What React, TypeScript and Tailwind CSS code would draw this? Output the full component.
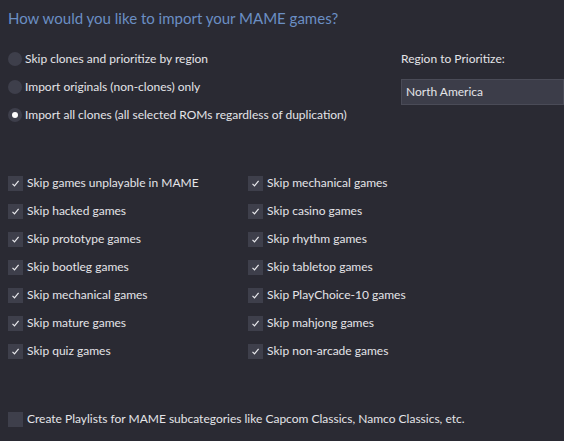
import { useState } from 'react'

const radios = [
  'Skip clones and prioritize by region',
  'Import originals (non-clones) only',
  'Import all clones (all selected ROMs regardless of duplication)',
]

const leftChecks = [
  'Skip games unplayable in MAME',
  'Skip hacked games',
  'Skip prototype games',
  'Skip bootleg games',
  'Skip mechanical games',
  'Skip mature games',
  'Skip quiz games',
]

const rightChecks = [
  'Skip mechanical games',
  'Skip casino games',
  'Skip rhythm games',
  'Skip tabletop games',
  'Skip PlayChoice-10 games',
  'Skip mahjong games',
  'Skip non-arcade games',
]

function Radio({ label, checked }: { label: string; checked: boolean }) {
  return (
    <div className="flex h-7 items-center">
      <span className="flex h-[14px] w-[14px] items-center justify-center rounded-full bg-[#3e3f4b]">
        {checked && <span className="h-[6px] w-[6px] rounded-full bg-white" />}
      </span>
      <span className="ml-[3px]">{label}</span>
    </div>
  )
}

function Check({ label, checked }: { label: string; checked: boolean }) {
  return (
    <div className="flex h-7 items-center">
      <span className="flex h-[15px] w-[15px] items-center justify-center bg-[#3e3f4b]">
        {checked && (
          <svg width="9" height="9" viewBox="0 0 9 9" fill="none">
            <path d="M1.5 4.8 L3.5 6.8 L7.6 1.8" stroke="#e8e8ec" strokeWidth="1.2" />
          </svg>
        )}
      </span>
      <span className="ml-[4px]">{label}</span>
    </div>
  )
}

export default function App() {
  const [selected] = useState(2)

  return (
    <div
      className="h-[441px] w-[564px] overflow-hidden bg-[#2a2a33] text-[12px] text-[#e4e4e8]"
      style={{ fontFamily: 'Lato, "Open Sans", sans-serif' }}
    >
      <h1 className="pl-2 pt-[6px] text-[15px] leading-6 text-[#6b8fc4]">
        How would you like to import your MAME games?
      </h1>

      <div className="mt-[15px] flex pl-2">
        <div className="w-[393px]">
          {radios.map((r, i) => (
            <Radio key={r} label={r} checked={i === selected} />
          ))}
        </div>
        <div className="flex-1">
          <div className="flex h-7 items-center">Region to Prioritize:</div>
          <div className="mt-[6px] flex h-[26px] items-center border border-[#4a4b57] bg-[#3c3d49] pl-[4px]">
            North America
          </div>
        </div>
      </div>

      <div className="mt-[40px] flex pl-2">
        <div className="w-[240px]">
          {leftChecks.map((c) => (
            <Check key={c} label={c} checked />
          ))}
        </div>
        <div>
          {rightChecks.map((c) => (
            <Check key={c + 'r'} label={c} checked />
          ))}
        </div>
      </div>

      <div className="mt-[40px] pl-2">
        <Check label="Create Playlists for MAME subcategories like Capcom Classics, Namco Classics, etc." checked={false} />
      </div>
    </div>
  )
}
